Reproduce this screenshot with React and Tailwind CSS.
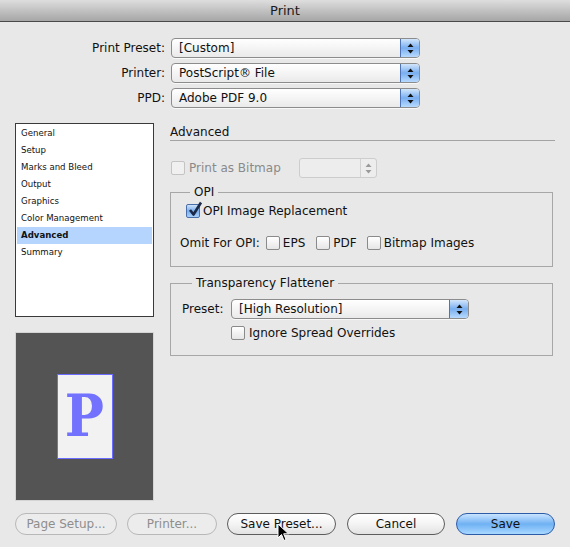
import React from 'react';

const font = { fontFamily: '"DejaVu Sans", "Liberation Sans", sans-serif' };

// up/down arrows used by popups and the stepper
const Arrows = ({ color = '#111' }) => (
  <svg width="7" height="11" viewBox="0 0 7 11">
    <path d="M3.5 0.5 L6.5 4 L0.5 4 Z" fill={color} />
    <path d="M3.5 10.5 L6.5 7 L0.5 7 Z" fill={color} />
  </svg>
);

const Popup = ({ value, width }) => (
  <div
    className="flex h-[20px] rounded-[4px] border border-[#8c8c8c] bg-linear-to-b from-white to-[#eaeaea] shadow-[0_1px_0_rgba(255,255,255,0.7)]"
    style={{ width }}
  >
    <div className="flex-1 pl-[7px] text-[12px] leading-[18px] text-[#111]">{value}</div>
    <div className="flex w-[19px] items-center justify-center rounded-r-[3px] border-l border-[#4d74b8] bg-linear-to-b from-[#d2e6fb] via-[#78aef0] to-[#b7dafe]">
      <Arrows />
    </div>
  </div>
);

const Checkbox = ({ checked, disabled }) => (
  <div
    className={`relative h-[14px] w-[14px] shrink-0 rounded-[2px] border ${
      disabled
        ? 'border-[#c4c4c4] bg-[#f0f0f0]'
        : checked
        ? 'border-[#4a6ea8] bg-linear-to-b from-[#cfe3fa] via-[#79adeb] to-[#a8d0fa]'
        : 'border-[#8a8a8a] bg-linear-to-b from-white to-[#e6e6e6]'
    }`}
  >
    {checked && (
      <svg className="absolute left-[1px] top-[-4px]" width="15" height="16" viewBox="0 0 15 16">
        <path d="M2 9 L5.5 13.5 L13 1.5" stroke="#1b2a48" strokeWidth="2.6" fill="none" strokeLinejoin="round" />
      </svg>
    )}
  </div>
);

const Button = ({ label, width, kind }) => {
  const styles = {
    disabled: 'border-[#b8b8b8] bg-[#ececec] text-[#8e8e8e]',
    normal: 'border-[#5c5c5c] bg-linear-to-b from-white via-[#f4f4f4] to-[#e2e2e2] text-[#111]',
    primary: 'border-[#2c5ba8] bg-linear-to-b from-[#c9e4ff] via-[#6fb1f3] to-[#a8d8ff] text-[#111]',
  };
  return (
    <div
      className={`flex h-[22px] items-center justify-center rounded-full border text-[12px] ${styles[kind]}`}
      style={{ width }}
    >
      {label}
    </div>
  );
};

const sections = ['General', 'Setup', 'Marks and Bleed', 'Output', 'Graphics', 'Color Management', 'Advanced', 'Summary'];

export default function App() {
  return (
    <div className="relative h-[547px] w-[570px] overflow-hidden bg-[#e8e8e8] text-[#111]" style={font}>
      {/* title bar */}
      <div className="flex h-[22px] items-center justify-center border-b border-[#4a4a4a] bg-linear-to-b from-[#dedede] to-[#a6a6a6] text-[13px] text-[#1a1a1a]">
        Print
      </div>

      {/* preset / printer / ppd */}
      <div className="flex flex-col gap-[5px] pt-[16px]">
        {[
          ['Print Preset:', '[Custom]'],
          ['Printer:', 'PostScript® File'],
          ['PPD:', 'Adobe PDF 9.0'],
        ].map(([label, value]) => (
          <div key={label} className="flex items-center gap-[6px]">
            <div className="w-[165px] text-right text-[12px]">{label}</div>
            <Popup value={value} width={249} />
          </div>
        ))}
      </div>

      <div className="mt-[15px] flex gap-[16px] pl-[15px]">
        {/* left column */}
        <div className="flex w-[139px] flex-col">
          <div className="h-[194px] border border-[#3a3a3a] bg-white p-[1px] pt-[0.5px]">
            {sections.map((s) => (
              <div
                key={s}
                className={`h-[17px] pl-[4px] text-[8.6px] leading-[17px] ${
                  s === 'Advanced' ? 'bg-[#b5d5ff] font-bold' : ''
                }`}
              >
                {s}
              </div>
            ))}
          </div>
          <div className="mt-[15px] flex h-[169px] items-center justify-center border border-[#d4d4d4] bg-[#545454]">
            <div className="flex h-[85px] w-[56px] items-center justify-center overflow-hidden border border-[#6b6bff] bg-[#f2f2f2]">
              <span
                className="pb-[2px] text-[58px] font-bold leading-none text-[#7272ff]"
                style={{ fontFamily: '"DejaVu Serif", "Liberation Serif", serif', fontStretch: 'condensed' }}
              >
                P
              </span>
            </div>
          </div>
        </div>

        {/* right panel */}
        <div className="flex w-[385px] flex-col">
          <div className="h-[18px] border-b border-[#a3a3a3] pt-[2px] text-[12px] leading-[15px]">Advanced</div>

          <div className="mt-[17px] flex h-[20px] items-center">
            <div className="ml-[1px]">
              <Checkbox disabled />
            </div>
            <span className="ml-[4px] text-[12px] text-[#8a8a8a]">Print as Bitmap</span>
            <div className="ml-[18px] flex h-[20px] w-[78px] rounded-[3px] border border-[#cdcdcd] bg-[#ededed]">
              <div className="flex-1" />
              <div className="flex w-[16px] items-center justify-center border-l border-[#d2d2d2]">
                <Arrows color="#9a9a9a" />
              </div>
            </div>
          </div>

          <fieldset className="mr-[2px] mt-[7px] border border-[#a7a7a7] px-[9px] pb-[16px] pt-[3px]">
            <legend className="ml-[10px] px-[4px] text-[12px] leading-[15px]">OPI</legend>
            <div className="ml-[6px] flex h-[15px] items-center">
              <Checkbox checked />
              <span className="ml-[3px] text-[12px]">OPI Image Replacement</span>
            </div>
            <div className="mt-[17px] flex h-[15px] items-center text-[12px]">
              <span>Omit For OPI:</span>
              <div className="ml-[6px]"><Checkbox /></div>
              <span className="ml-[3px]">EPS</span>
              <div className="ml-[11px]"><Checkbox /></div>
              <span className="ml-[3px]">PDF</span>
              <div className="ml-[10px]"><Checkbox /></div>
              <span className="ml-[3px]">Bitmap Images</span>
            </div>
          </fieldset>

          <fieldset className="mr-[2px] mt-[9px] border border-[#a7a7a7] px-[11px] pb-[15px] pt-[8px]">
            <legend className="ml-[10px] px-[4px] text-[12px] leading-[15px]">Transparency Flattener</legend>
            <div className="flex items-center">
              <span className="w-[49px] text-[12px]">Preset:</span>
              <Popup value="[High Resolution]" width={238} />
            </div>
            <div className="ml-[49px] mt-[7px] flex h-[14px] items-center">
              <Checkbox />
              <span className="ml-[4px] text-[12px]">Ignore Spread Overrides</span>
            </div>
          </fieldset>
        </div>
      </div>

      {/* buttons */}
      <div className="mt-[12px] flex pl-[15px]">
        <Button label="Page Setup..." width={102} kind="disabled" />
        <div className="ml-[10px]"><Button label="Printer..." width={90} kind="disabled" /></div>
        <div className="ml-[10px]"><Button label="Save Preset..." width={109} kind="normal" /></div>
        <div className="ml-[11px]"><Button label="Cancel" width={98} kind="normal" /></div>
        <div className="ml-[11px]"><Button label="Save" width={99} kind="primary" /></div>
      </div>

      {/* mouse cursor */}
      <svg className="absolute left-[277px] top-[523px]" width="13" height="19" viewBox="0 0 13 19">
        <path d="M1 1 L1 15 L4.5 11.5 L7 17.5 L9 16.5 L6.7 10.8 L11.5 10.8 Z" fill="#000" stroke="#fff" strokeWidth="1" strokeLinejoin="round" />
      </svg>
    </div>
  );
}
